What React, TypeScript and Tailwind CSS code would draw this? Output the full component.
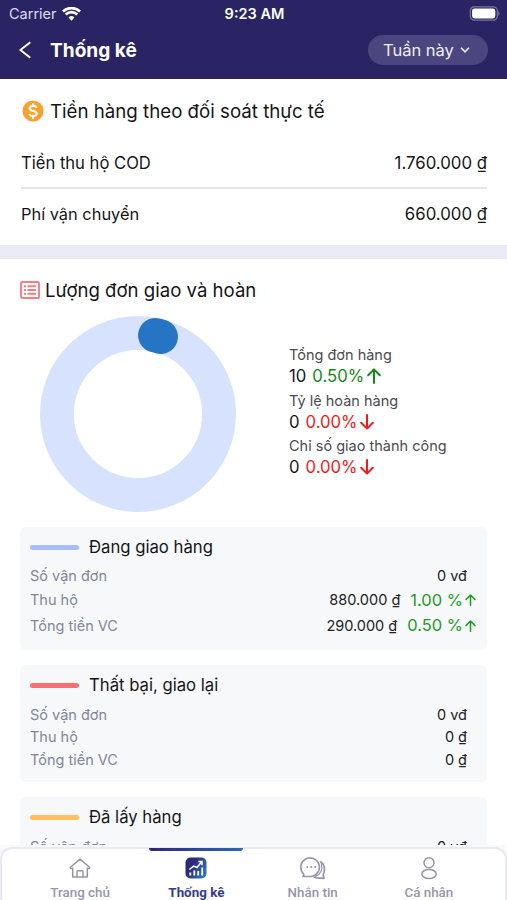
import React from 'react'

type Change = { value: string; down?: boolean }
type Row = { label: string; value: string; change?: Change; height: string; valueEnd?: string }
type Group = { title: string; color: string; rows: Row[]; className: string }

const groups: Group[] = [
  {
    title: 'Đang giao hàng',
    color: 'bg-[#a9bcfb]',
    className: 'h-[123px]',
    rows: [
      { label: 'Số vận đơn', value: '0 vđ', height: 'h-[22px]', valueEnd: 'pr-[9px]' },
      { label: 'Thu hộ', value: '880.000 ₫', change: { value: '1.00 %' }, height: 'h-[26px]' },
      { label: 'Tổng tiền VC', value: '290.000 ₫', change: { value: '0.50 %' }, height: 'h-[25px]' },
    ],
  },
  {
    title: 'Thất bại, giao lại',
    color: 'bg-[#f87171]',
    className: 'mt-[15px] h-[117px]',
    rows: [
      { label: 'Số vận đơn', value: '0 vđ', height: 'h-[23px]', valueEnd: 'pr-[9px]' },
      { label: 'Thu hộ', value: '0 ₫', height: 'h-[22px]', valueEnd: 'pr-[9px]' },
      { label: 'Tổng tiền VC', value: '0 ₫', height: 'h-[23px]', valueEnd: 'pr-[9px]' },
    ],
  },
  {
    title: 'Đã lấy hàng',
    color: 'bg-[#fdbf60]',
    className: 'mt-[15px] h-[117px]',
    rows: [{ label: 'Số vận đơn', value: '0 vđ', height: 'h-[23px]', valueEnd: 'pr-[9px]' }],
  },
]

function Arrow({ down, className }: { down?: boolean; className: string }) {
  return (
    <svg viewBox="0 0 14 16" className={className} fill="none" stroke="currentColor" strokeWidth="2" strokeLinecap="round" strokeLinejoin="round">
      {down ? <path d="M7 1v13.5M1.2 8.8 7 14.6l5.8-5.8" /> : <path d="M7 15V1.5M1.2 7.2 7 1.4l5.8 5.8" />}
    </svg>
  )
}

function Header() {
  return (
    <header className="h-[79px] shrink-0 bg-[#2b2464] text-white">
      <div className="grid h-7 grid-cols-3 items-center pr-[7px] pl-[9px] text-[14.5px]">
        <div className="flex items-center gap-[5px] text-[#dcdaf0]">
          <span>Carrier</span>
          <svg viewBox="0 0 20 14" className="h-[14px] w-[19px]" fill="#fff">
            <path d="M10 14 6.9 10.6a4.6 4.6 0 0 1 6.2 0Z" />
            <path d="M3.9 7.5a8.9 8.9 0 0 1 12.2 0M1 4.3a13.2 13.2 0 0 1 18 0" fill="none" stroke="#fff" strokeWidth="2.8" />
          </svg>
        </div>
        <span className="text-center text-[14.5px] font-semibold whitespace-nowrap">9:23 AM</span>
        <svg viewBox="0 0 31 15" className="-mt-[2px] h-[15px] w-[31px] justify-self-end">
          <rect x="1.3" y="0.8" width="27" height="13.4" rx="4" fill="none" stroke="#7a75a3" strokeWidth="1.2" />
          <rect x="3.1" y="2.5" width="23.2" height="10" rx="2.4" fill="#fff" />
          <path d="M29.4 5.2v4.6c1.6-.6 1.6-4 0-4.6Z" fill="#7a75a3" />
        </svg>
      </div>
      <div className="flex h-11 items-center pr-[19px] pl-[18px]">
        <svg viewBox="0 0 14 18" className="h-[18px] w-[14px]" fill="none" stroke="#fff" strokeWidth="1.9">
          <path d="M12.3 1.2 2.4 9l9.9 7.8" />
        </svg>
        <h1 className="ml-[18px] text-[19.1px] font-bold">Thống kê</h1>
        <button className="ml-auto flex h-[30px] w-[120px] items-center rounded-full bg-[#4b4580] pl-[15px] text-[16.5px] text-[#f0eff8]">
          <span className="whitespace-nowrap">Tuần này</span>
          <svg viewBox="0 0 10 6" className="ml-[6px] h-[6px] w-[10px]" fill="none" stroke="currentColor" strokeWidth="1.6">
            <path d="m1 .8 4 4 4-4" />
          </svg>
        </button>
      </div>
    </header>
  )
}

function Money() {
  return (
    <section className="h-[166px] shrink-0 bg-white pr-5 pl-[21px]">
      <div className="flex h-[60px] items-center pt-[4px] pl-[1px]">
        <svg viewBox="0 0 22 22" className="h-[22px] w-[22px]">
          <circle cx="11" cy="11" r="10.5" fill="#fb9f2d" />
          <path d="M14.5 7.8c-.5-1.3-1.8-1.9-3.5-1.9-2 0-3.4.9-3.4 2.5 0 3.5 7.1 1.6 7.1 5.2 0 1.6-1.5 2.5-3.6 2.5-2 0-3.4-.8-3.8-2.3M11 3.2v2.7M11 16.1v2.7" fill="none" stroke="#fff" strokeWidth="2.1" />
        </svg>
        <h2 className="ml-[6px] pt-[2px] text-[18.7px] whitespace-nowrap">Tiền hàng theo đối soát thực tế</h2>
      </div>
      <div className="flex h-[50px] items-center justify-between border-b-2 border-[#e4e4f3] text-[16.6px]">
        <span>Tiền thu hộ COD</span>
        <span className="pt-[2px] text-[16.8px]">1.760.000 ₫</span>
      </div>
      <div className="flex h-[50px] items-center justify-between text-[16.4px]">
        <span>Phí vận chuyển</span>
        <span className="pt-[2px] text-[16.8px]">660.000 ₫</span>
      </div>
    </section>
  )
}

function Stat({ label, total, change }: { label: string; total: string; change: Change }) {
  return (
    <div className="h-[45.7px]">
      <div className="h-[21px] text-[14.5px] leading-[21px] text-[#4b4b4f]">{label}</div>
      <div className="flex h-[22px] items-center text-[16.7px] leading-[22px]">
        <span>{total}</span>
        <span className={change.down ? 'ml-[6px] flex items-center text-[#fb1717]' : 'ml-[6px] flex items-center text-[#128a12]'}>
          {change.value}
          <Arrow down={change.down} className="ml-[3px] h-[16px] w-[14px]" />
        </span>
      </div>
    </div>
  )
}

function GroupCard({ group }: { group: Group }) {
  return (
    <div className={'shrink-0 rounded-md bg-[#f6f8fa] pr-[11px] pl-[10px] ' + group.className}>
      <div className="flex h-[38px] items-center pt-[2px]">
        <span className={'h-[5px] w-[49px] rounded-full ' + group.color}></span>
        <span className="ml-[10px] pt-[2px] text-[16.7px]">{group.title}</span>
      </div>
      {group.rows.map((row) => (
        <div key={row.label} className={'flex items-center justify-between text-[14.5px] ' + row.height}>
          <span className="text-[#82869a]">{row.label}</span>
          <div className={'flex items-center ' + (row.valueEnd ?? '')}>
            <span className="text-[#222226]">{row.value}</span>
            {row.change && (
              <span className="ml-[10px] flex items-center text-[16.5px] text-[#1f9a1f]">
                {row.change.value}
                <Arrow className="ml-[2px] h-[12px] w-[11px]" />
              </span>
            )}
          </div>
        </div>
      ))}
    </div>
  )
}

function Orders() {
  return (
    <section className="flex min-h-0 flex-1 flex-col overflow-hidden bg-white px-5">
      <div className="flex h-[59px] shrink-0 items-center pt-[4px]">
        <svg viewBox="0 0 20 18" className="-mt-px h-[18px] w-[20px]" fill="none" stroke="#f77c83" strokeWidth="1.9">
          <rect x="1" y="1" width="18" height="16" rx="1.6" />
          <path d="M7.5 5.3h8.5M7.5 9H16M7.5 12.7h8.5M4 5.3h2M4 9h2M4 12.7h2" />
        </svg>
        <h2 className="ml-[5px] text-[18.6px] whitespace-nowrap">Lượng đơn giao và hoàn</h2>
      </div>
      <div className="flex h-[209px] shrink-0">
        <svg viewBox="0 0 196 196" className="-mt-[2px] ml-[20px] h-[196px] w-[196px]" fill="none" strokeWidth="34">
          <circle cx="98" cy="98" r="81" stroke="#d7e3fe" />
          <path d="M115.3 19.3A80.5 80.5 0 0 1 120.7 20.8" stroke="#2674c4" strokeWidth="34.5" strokeLinecap="round" />
        </svg>
        <div className="ml-[53px] pt-[26px]">
          <Stat label="Tổng đơn hàng" total="10" change={{ value: '0.50%' }} />
          <Stat label="Tỷ lệ hoàn hàng" total="0" change={{ value: '0.00%', down: true }} />
          <Stat label="Chỉ số giao thành công" total="0" change={{ value: '0.00%', down: true }} />
        </div>
      </div>
      {groups.map((group) => (
        <GroupCard key={group.title} group={group} />
      ))}
    </section>
  )
}

function HomeIcon() {
  return (
    <svg viewBox="0 0 22 20" className="h-[20px] w-[22px]" fill="none" stroke="currentColor" strokeWidth="1.5" strokeLinejoin="round" strokeLinecap="round">
      <path d="M3.7 10.2v8.9h14.6v-8.9M1.2 9.5 11 1.1l9.8 8.4c-.4 1.1-1.5 1.2-2.5.6M1.2 9.5c.4 1.1 1.5 1.2 2.5.6" />
      <path d="M8 19v-5.2c0-.7.4-1.1 1.1-1.1h3.8c.7 0 1.1.4 1.1 1.1V19" />
    </svg>
  )
}

function ChartIcon() {
  return (
    <svg viewBox="0 0 22 22" className="h-[22px] w-[22px]">
      <defs>
        <linearGradient id="tab" x1="0" y1="0.2" x2="1" y2="0.8">
          <stop offset="0.3" stopColor="#2d2a7d" />
          <stop offset="1" stopColor="#2b7dc9" />
        </linearGradient>
      </defs>
      <rect x="0.5" y="0.5" width="21" height="21" rx="5" fill="url(#tab)" />
      <path d="M5.3 15.5v3M9.3 13.5v5M13.2 14v4.5M17.2 10.5v8" stroke="#fff" strokeWidth="1.8" />
      <path d="m4.3 12.5 4.4-3.4 3.3 1.4 4.5-5.6M13.4 4.6h3.6v3.6" fill="none" stroke="#fff" strokeWidth="1.5" />
    </svg>
  )
}

function ChatIcon() {
  return (
    <svg viewBox="0 0 26 24" className="h-[24px] w-[26px]" fill="none" stroke="currentColor" strokeWidth="1.7" strokeLinejoin="round" strokeLinecap="round">
      <path d="M3 20.5c.8-.8.9-1.7.4-2.8A9.3 9.3 0 1 1 11 20.5Z" />
      <path d="M20.6 5.8c4 2.5 5 8 2.7 12.3-.3 1.5.2 2.4.8 4.2-2 .1-3.4-.2-5.6-.2-2 0-3.2-.3-4.4-1" />
      <path d="M21.3 7.5c1.7 5.8-.6 11-6 13" strokeWidth="1.2" />
      <path d="M7.2 11h.1M11.2 11h.1M15.2 11h.1" strokeWidth="1.8" />
    </svg>
  )
}

function PersonIcon() {
  return (
    <svg viewBox="0 0 18 24" className="h-[24px] w-[18px]" fill="none" stroke="currentColor" strokeWidth="1.5">
      <circle cx="9" cy="6.8" r="5" />
      <ellipse cx="9" cy="18" rx="7.2" ry="4.6" />
    </svg>
  )
}

const tabs = [
  { name: 'Trang chủ', icon: <HomeIcon /> },
  { name: 'Thống kê', icon: <ChartIcon />, active: true },
  { name: 'Nhắn tin', icon: <ChatIcon /> },
  { name: 'Cá nhân', icon: <PersonIcon /> },
]

function TabBar() {
  return (
    <nav className="h-[55px] shrink-0 bg-[#f9f9fc] pt-[2px]">
      <div className="grid h-full grid-cols-4 rounded-t-[12px] border-x-2 border-t-2 border-[#e9e9f3] bg-white pr-[18px] pl-5 font-['Roboto','Noto_Sans',sans-serif]">
        {tabs.map((tab) => (
          <div
            key={tab.name}
            className={
              tab.active
                ? 'relative flex flex-col items-center text-[13.4px] font-bold text-[#343b96]'
                : 'relative flex flex-col items-center text-[13.4px] font-medium text-[#9696aa]'
            }
          >
            {tab.active && <span className="absolute -top-px h-[3px] w-[94px] rounded-b bg-linear-to-r from-[#2c2678] to-[#2c68b6]"></span>}
            <span className="flex h-[37px] items-center">{tab.icon}</span>
            <span className="-mt-[2px] leading-[18px] whitespace-nowrap">{tab.name}</span>
          </div>
        ))}
      </div>
    </nav>
  )
}

export default function App() {
  return (
    <div className="flex h-[900px] w-[507px] flex-col overflow-hidden bg-white font-['Inter','Noto_Sans',sans-serif] text-[#151518]">
      <Header />
      <Money />
      <div className="h-[14px] shrink-0 bg-[#ebebf7]"></div>
      <Orders />
      <TabBar />
    </div>
  )
}
